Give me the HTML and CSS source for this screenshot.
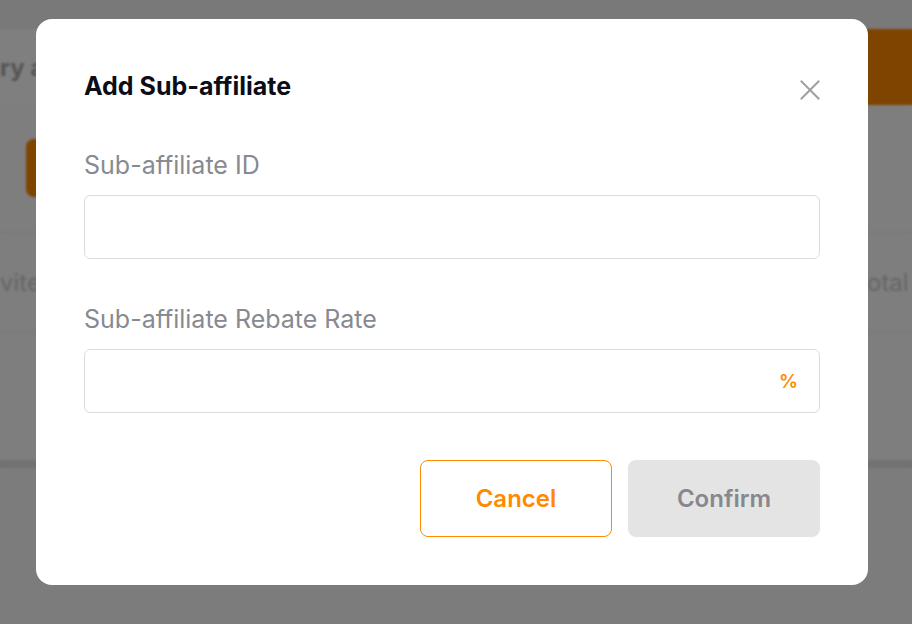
FILE: index.html
```html
<!DOCTYPE html>
<html lang="en">
<head>
<meta charset="utf-8">
<title>Add Sub-affiliate</title>
<link rel="stylesheet" href="styles.css">
</head>
<body>
<div class="page">
  <div class="topbar"></div>
  <div class="header">
    <div class="page-title-clip"><h1 class="page-title">ry a</h1></div>
    <div class="header-tab"></div>
  </div>
  <div class="toolbar">
    <div class="tool-btn"></div>
  </div>
  <div class="stats-row">
    <span class="stat-left">vite</span>
    <span class="stat-right">otal T</span>
  </div>
  <div class="spacer"></div>
  <div class="band"></div>
  <div class="rest"></div>
</div>

<div class="overlay">
  <div class="modal" role="dialog" aria-labelledby="dlg-title">
    <div class="modal-head">
      <h2 class="modal-title" id="dlg-title">Add Sub-affiliate</h2>
      <button class="close-btn" aria-label="Close">
        <svg width="20" height="20" viewBox="0 0 20 20"><path d="M1.5 1.5 L18.5 18.5 M18.5 1.5 L1.5 18.5" stroke="#a0a0a0" stroke-width="2" stroke-linecap="square" fill="none"/></svg>
      </button>
    </div>
    <div class="field">
      <label class="field-label">Sub-affiliate ID</label>
      <div class="input"></div>
    </div>
    <div class="field field-last">
      <label class="field-label">Sub-affiliate Rebate Rate</label>
      <div class="input input-suffix"><span class="suffix">%</span></div>
    </div>
    <div class="modal-foot">
      <button class="btn btn-cancel">Cancel</button>
      <button class="btn btn-confirm">Confirm</button>
    </div>
  </div>
</div>
</body>
</html>
```
FILE: styles.css
```css
* { box-sizing: border-box; }
html, body { margin: 0; padding: 0; }
body {
  width: 912px;
  height: 624px;
  overflow: hidden;
  font-family: Inter, "Noto Sans", "Liberation Sans", sans-serif;
  background: #f4f4f4;
}

/* background page */
.page { width: 912px; }
.topbar { height: 29px; background: #f2f2f2; }
.header {
  height: 76px;
  background: #ffffff;
  display: flex;
  align-items: center;
  justify-content: space-between;
  overflow: hidden;
}
.page-title-clip { width: 60px; overflow: hidden; }
.page-title {
  margin: 0;
  font-size: 24px;
  font-weight: 700;
  color: #aaaaaa;
  white-space: nowrap;
}
.header-tab {
  width: 150px;
  height: 100%;
  background: #ff8a00;
}
.toolbar {
  background: #fcfcfc;
  padding: 34px 0 35px 26px;
  border-bottom: 1px solid #f0f0f0;
}
.tool-btn {
  width: 200px;
  height: 58px;
  border-radius: 8px;
  background: #ff8a00;
}
.stats-row {
  height: 100px;
  background: #fcfcfc;
  display: flex;
  align-items: center;
  justify-content: space-between;
  border-bottom: 1px solid #f0f0f0;
  font-size: 24px;
  color: #cdcdcd;
  white-space: nowrap;
}
.stat-right { width: 59px; padding-left: 14px; }
.spacer { height: 127px; background: #fcfcfc; }
.band { height: 8px; background: #e4e4e4; }
.rest { height: 160px; background: #f8f8f8; }

/* overlay + modal */
.overlay {
  position: fixed;
  inset: 0;
  background: rgba(0, 0, 0, 0.5);
  backdrop-filter: blur(1px);
  padding: 19px 0 0 36px;
}
.modal {
  width: 832px;
  background: #ffffff;
  border-radius: 16px;
  padding: 48px;
}
.modal-head {
  display: flex;
  justify-content: space-between;
  align-items: flex-start;
  margin-bottom: 46px;
}
.modal-title {
  margin: 0;
  padding-top: 2px;
  font-size: 25px;
  line-height: 34px;
  font-weight: 700;
  color: #0b0d17;
}
.close-btn {
  margin-top: 13px;
  width: 20px;
  height: 20px;
  padding: 0;
  border: 0;
  background: none;
  display: block;
}
.close-btn svg { display: block; }

.field { margin-bottom: 44px; }
.field-last { margin-bottom: 47px; }
.field-label {
  display: block;
  font-size: 25px;
  line-height: 32px;
  color: #878a90;
  margin-bottom: 14px;
}
.input {
  height: 64px;
  border: 1px solid #dcdcdc;
  border-radius: 6px;
}
.input-suffix {
  display: flex;
  align-items: center;
  justify-content: flex-end;
  padding-right: 21px;
}
.suffix {
  color: #ff8a00;
  font-size: 19px;
  font-weight: 600;
}

.modal-foot {
  display: flex;
  justify-content: flex-end;
  gap: 16px;
}
.btn {
  width: 192px;
  height: 77px;
  border-radius: 8px;
  font-family: Inter, "Noto Sans", "Liberation Sans", sans-serif;
  font-size: 24px;
  font-weight: 600;
  cursor: pointer;
}
.btn-cancel {
  background: #ffffff;
  border: 1px solid #ff8a00;
  color: #ff8a00;
}
.btn-confirm {
  background: #e4e4e4;
  border: 0;
  color: #85888e;
}
```
